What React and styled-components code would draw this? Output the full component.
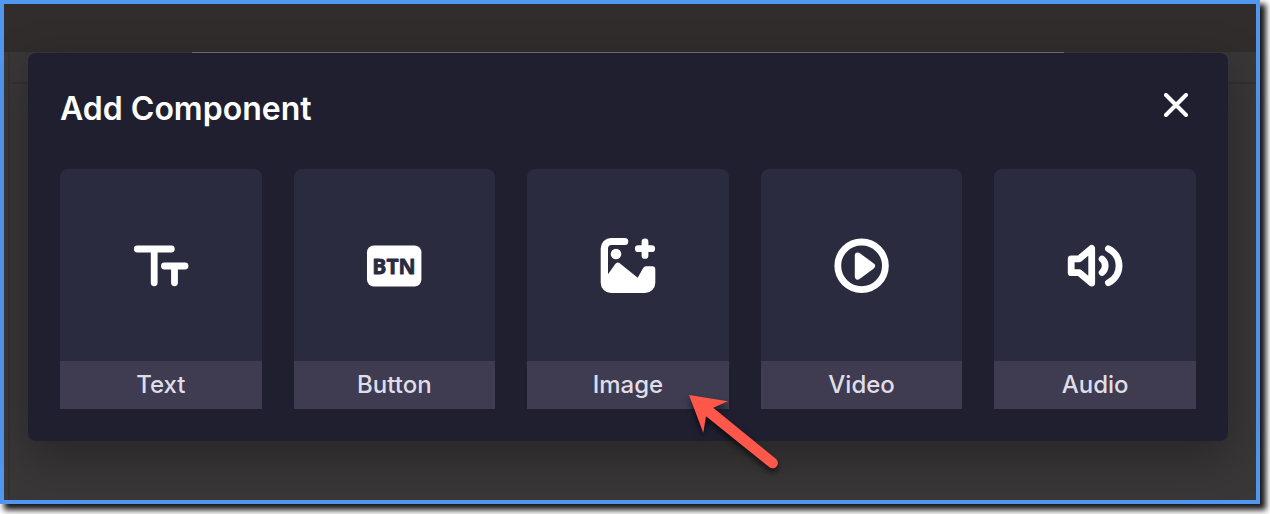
import React from 'react'
import styled, { createGlobalStyle } from 'styled-components';

const GlobalStyle = createGlobalStyle`
  * {
    box-sizing: border-box;
  }
  body {
    margin: 0;
    background: #fff;
    font-family: Inter, "Liberation Sans", sans-serif;
  }
`

const Page = styled.div`
  padding: 0 10px 10px 0;
`

const Frame = styled.main`
  border: 4px solid #5297ef;
  background: #393737;
  box-shadow: 5px 5px 6px 1px rgba(0, 0, 0, 0.9);
`

const TopBar = styled.div`
  height: 48px;
  background: #312d2c;
`

const Canvas = styled.div`
  padding: 0 28px 59px 24px;
  background:
    linear-gradient(#333131, #333131) 4px 0 / 2px 100% no-repeat,
    linear-gradient(#333131, #333131) 6px 30px / 100% 2px no-repeat,
    #393737;
`

const Edge = styled.div`
  height: 1px;
  margin: 0 164px;
  background: #73736f;
`

const Dialog = styled.section`
  padding: 32px;
  border-radius: 8px;
  background: #1f1f30;
  box-shadow: 0 16px 48px rgba(0, 0, 0, 0.32);
`

const DialogHeader = styled.header`
  display: flex;
  justify-content: space-between;
  align-items: flex-start;
  margin-bottom: 36px;
`

const Title = styled.h2`
  margin: 0;
  font-size: 32px;
  font-weight: 600;
  line-height: 48px;
  color: #fff;
`

const CloseButton = styled.button`
  display: flex;
  justify-content: center;
  align-items: center;
  width: 40px;
  height: 40px;
  padding: 0;
  border: 0;
  background: none;
  color: #fff;
  cursor: pointer;
`

const CardList = styled.ul`
  display: grid;
  grid-template-columns: repeat(5, 1fr);
  gap: 32px;
  margin: 0;
  padding: 0;
  list-style: none;
`

const CardItem = styled.li`
  position: relative;
`

const Card = styled.button`
  display: flex;
  flex-direction: column;
  width: 100%;
  padding: 0;
  border: 0;
  border-radius: 8px 8px 0 0;
  overflow: hidden;
  background: #2b2b3f;
  font-family: inherit;
  cursor: pointer;
`

const Preview = styled.span`
  display: flex;
  justify-content: center;
  align-items: center;
  width: 100%;
  height: 192px;
  color: #fff;
`

const Label = styled.span`
  width: 100%;
  background: #3f3c52;
  color: #dfdee8;
  font-size: 24px;
  font-weight: 500;
  line-height: 48px;
  text-align: center;
`

const Pointer = styled.svg`
  position: absolute;
  top: 90%;
  left: 75%;
  z-index: 1;
  overflow: visible;
  pointer-events: none;
  filter: drop-shadow(0 4px 3px rgba(0, 0, 0, 0.6));
`

const Icon = ({ children }) => (
  <svg
    width="64"
    height="64"
    viewBox="0 0 64 64"
    fill="none"
    stroke="currentColor"
    strokeWidth="6.8"
    strokeLinecap="round"
    strokeLinejoin="round"
    aria-hidden="true"
  >
    {children}
  </svg>
)

const TextIcon = () => (
  <Icon>
    <path d="M8.3 16H42.3M25.2 16V49.8M35.4 33H56M45.5 33V49.8" />
  </Icon>
)

const ButtonIcon = () => (
  <Icon>
    <rect x="5" y="12.4" width="54.4" height="41" rx="6.8" fill="currentColor" stroke="none" />
    <text
      x="32"
      y="40.6"
      textAnchor="middle"
      fontFamily="'Open Sans', sans-serif"
      fontSize="21"
      fontWeight="700"
      fill="#2b2b3f"
      stroke="#2b2b3f"
      strokeWidth="0.8"
    >
      BTN
    </text>
  </Icon>
)

const ImageIcon = () => (
  <Icon>
    <path
      d="M15 5H28.8a3.5 3.5 0 0 1 0 7H15.5a3.5 3.5 0 0 0-3.5 3.5V41.3L19.3 31q2-2.6 4.4-.7L41.7 44.7 47 35.2q1-1.9 3-1.9h6.3a3 3 0 0 1 3 3V49.7A10.3 10.3 0 0 1 49 60H15A10.3 10.3 0 0 1 4.7 49.7V15.3A10.3 10.3 0 0 1 15 5Z"
      fill="currentColor"
      stroke="none"
    />
    <circle cx="20" cy="21" r="5.3" fill="currentColor" stroke="none" />
    <path d="M49 9V22.4M42.3 15.7H55.7" />
  </Icon>
)

const VideoIcon = () => (
  <Icon>
    <circle cx="31.6" cy="32.8" r="23.8" />
    <path d="M27.8 22.4 42 33 27.8 43.6Z" fill="currentColor" strokeWidth="6" />
  </Icon>
)

const AudioIcon = () => (
  <Icon>
    <path d="M8.2 25.8H16.2L28.7 15.4V50.1L16.2 39.7H8.2Z" />
    <path d="M39.1 26A8.9 8.9 0 0 1 39.1 39.5" />
    <path d="M45.4 15.7A18.9 18.9 0 0 1 45.4 49.7" />
  </Icon>
)

const components = [
  { name: 'Text', icon: TextIcon },
  { name: 'Button', icon: ButtonIcon },
  { name: 'Image', icon: ImageIcon, highlighted: true },
  { name: 'Video', icon: VideoIcon },
  { name: 'Audio', icon: AudioIcon },
]

const ArrowPointer = () => (
  <Pointer width="108" height="88" viewBox="0 0 108 88" aria-hidden="true">
    <path
      d="M11 10 49.9 16.3 35.2 22.7 97.8 73.8A5.2 5.2 0 0 1 91.4 82.2L28 31.2 25.3 47.7Z"
      fill="#ff584a"
    />
  </Pointer>
)

const ComponentCard = ({ item }) => {
  const ItemIcon = item.icon
  return (
    <CardItem>
      <Card type="button">
        <Preview><ItemIcon /></Preview>
        <Label>{item.name}</Label>
      </Card>
      {item.highlighted && <ArrowPointer />}
    </CardItem>
  )
}

const App = () => {
  return (
    <>
      <GlobalStyle />
      <Page>
        <Frame>
          <TopBar />
          <Canvas>
            <Edge />
            <Dialog role="dialog" aria-labelledby="dialog-title">
              <DialogHeader>
                <Title id="dialog-title">Add Component</Title>
                <CloseButton type="button" aria-label="Close">
                  <svg width="24" height="24" viewBox="0 0 24 24" stroke="currentColor" strokeWidth="4" strokeLinecap="round" aria-hidden="true">
                    <path d="M2 2 22 22M22 2 2 22" />
                  </svg>
                </CloseButton>
              </DialogHeader>
              <CardList>
                {components.map(item => (
                  <ComponentCard key={item.name} item={item} />
                ))}
              </CardList>
            </Dialog>
          </Canvas>
        </Frame>
      </Page>
    </>
  )
}

export default App;
